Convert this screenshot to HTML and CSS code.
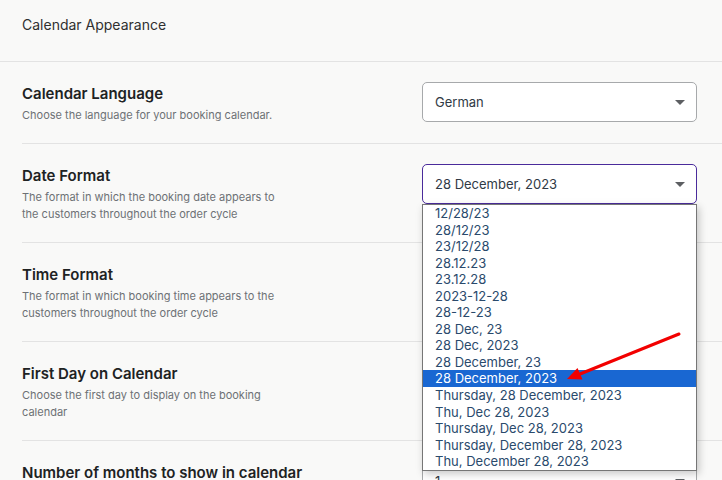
FILE: index.html
```html
<!DOCTYPE html>
<html>
<head>
<meta charset="utf-8">
<link rel="stylesheet" href="styles.css">
</head>
<body>
<div class="page">
  <header class="head">Calendar Appearance</header>
  <div class="rows">
    <div class="row">
      <div class="info">
        <div class="title">Calendar Language</div>
        <div class="desc">Choose the language for your booking calendar.</div>
      </div>
      <div class="select"><span>German</span><span class="caret"></span></div>
    </div>
    <div class="row">
      <div class="info">
        <div class="title">Date Format</div>
        <div class="desc">The format in which the booking date appears to the customers throughout the order cycle</div>
      </div>
      <div class="select-wrap">
        <div class="select focused"><span>28 December, 2023</span><span class="caret"></span></div>
        <ul class="list">
          <li>12/28/23</li>
          <li>28/12/23</li>
          <li>23/12/28</li>
          <li>28.12.23</li>
          <li>23.12.28</li>
          <li>2023-12-28</li>
          <li>28-12-23</li>
          <li>28 Dec, 23</li>
          <li>28 Dec, 2023</li>
          <li>28 December, 23</li>
          <li class="sel">28 December, 2023</li>
          <li>Thursday, 28 December, 2023</li>
          <li>Thu, Dec 28, 2023</li>
          <li>Thursday, Dec 28, 2023</li>
          <li>Thursday, December 28, 2023</li>
          <li>Thu, December 28, 2023</li>
        </ul>
      </div>
    </div>
    <div class="row">
      <div class="info">
        <div class="title">Time Format</div>
        <div class="desc">The format in which booking time appears to the customers throughout the order cycle</div>
      </div>
      <div class="select"><span>12 Hour</span><span class="caret"></span></div>
    </div>
    <div class="row">
      <div class="info">
        <div class="title">First Day on Calendar</div>
        <div class="desc">Choose the first day to display on the booking calendar</div>
      </div>
      <div class="select"><span>Sunday</span><span class="caret"></span></div>
    </div>
    <div class="row">
      <div class="info">
        <div class="title">Number of months to show in calendar</div>
        <div class="desc">Choose how many months are shown</div>
      </div>
      <div class="select"><span>1</span><span class="caret"></span></div>
    </div>
  </div>
</div>
<svg class="annot" width="722" height="480" viewBox="0 0 722 480">
  <line x1="679" y1="334" x2="580" y2="374" stroke="#f20000" stroke-width="3" stroke-linecap="round"/>
  <polygon points="567,379 582.5,379.5 577.5,368" fill="#f20000"/>
</svg>
</body>
</html>
```
FILE: styles.css
```css
html, body {
  margin: 0;
  padding: 0;
  background: #f9f9f8;
  overflow: hidden;
  height: 480px;
}
body {
  font-family: Inter, "Noto Sans", sans-serif;
  color: #222;
  position: relative;
}
.page {
  width: 722px;
}
.head {
  box-sizing: border-box;
  height: 62px;
  padding: 15px 22px 0;
  font-size: 14px;
  line-height: 20px;
  color: #303030;
  border-bottom: 1px solid #e3e3e3;
}
.rows {
  padding-left: 22px;
}
.row {
  display: flex;
  justify-content: space-between;
  align-items: flex-start;
  padding: 21px 0 19px;
  border-bottom: 1px solid #e3e3e3;
}
.info {
  width: 262px;
}
.title {
  font-size: 15px;
  font-weight: 600;
  line-height: 22px;
  color: #202223;
  white-space: nowrap;
}
.desc {
  margin-top: 2px;
  font-size: 11px;
  line-height: 17px;
  color: #6d7175;
}
.select-wrap {
  position: relative;
  margin-right: 25px;
  margin-top: -1px;
}
.select {
  box-sizing: border-box;
  width: 275px;
  height: 40px;
  margin-right: 25px;
  margin-top: -1px;
  background: #fff;
  border: 1px solid #a7a9ab;
  border-radius: 5px;
  display: flex;
  align-items: center;
  justify-content: space-between;
  padding: 0 11px 0 12px;
  font-size: 13px;
  color: #303a45;
}
.select-wrap .select {
  margin: 0;
}
.select.focused {
  border-color: #4a2b9b;
}
.caret {
  width: 0;
  height: 0;
  border-left: 5px solid transparent;
  border-right: 5px solid transparent;
  border-top: 5px solid #5c5f62;
}
.list {
  position: absolute;
  z-index: 5;
  top: 40px;
  left: 0;
  width: 275px;
  box-sizing: border-box;
  margin: 0;
  padding: 0;
  list-style: none;
  background: #fff;
  border: 1px solid #767676;
  box-shadow: 2px 3px 8px rgba(0, 0, 0, 0.22);
}
.list li {
  height: 16.55px;
  line-height: 16.55px;
  padding-left: 12px;
  font-size: 13px;
  color: #2a4a6c;
  white-space: nowrap;
}
.list li.sel {
  background: #1967d2;
  color: #fff;
}
.annot {
  position: absolute;
  left: 0;
  top: 0;
  z-index: 10;
  pointer-events: none;
}
```
